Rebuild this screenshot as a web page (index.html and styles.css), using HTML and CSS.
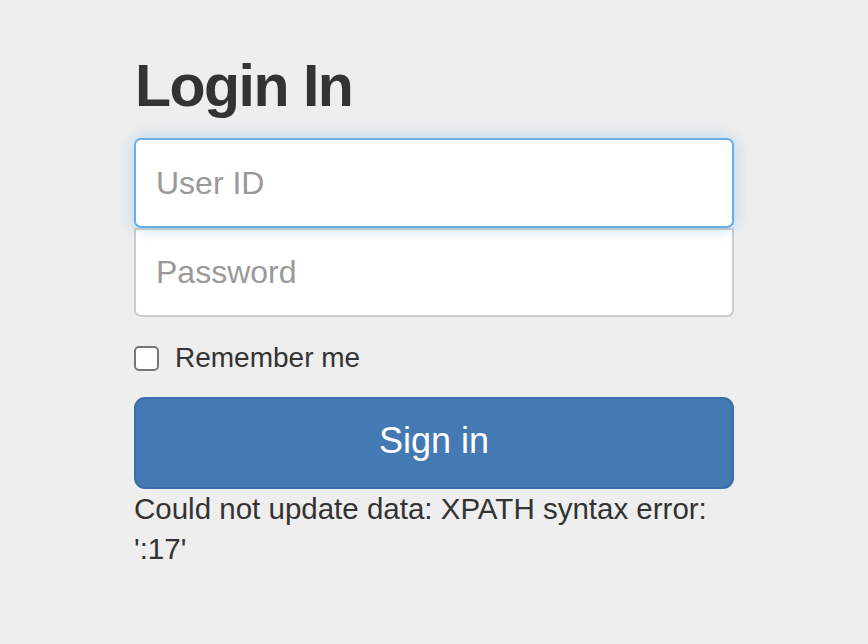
FILE: index.html
```html
<!DOCTYPE html>
<html>
<head>
<meta charset="utf-8">
<link rel="stylesheet" href="styles.css">
</head>
<body>
<div class="container">
  <form class="form-signin">
    <h2 class="heading">Login In</h2>
    <input class="field field-focus" type="text" placeholder="User ID">
    <input class="field field-pass" type="password" placeholder="Password">
    <label class="remember"><span class="check"></span>Remember me</label>
    <button class="btn" type="button">Sign in</button>
    <p class="error">Could not update data: XPATH syntax error: ':17'</p>
  </form>
</div>
</body>
</html>
```

FILE: styles.css
```css
html, body {
  margin: 0;
  padding: 0;
  background: #eeeeee;
  font-family: "Liberation Sans", Arial, Helvetica, sans-serif;
  color: #333333;
}
.container {
  display: flex;
  justify-content: center;
  padding-top: 53px;
}
.form-signin {
  width: 600px;
  display: flex;
  flex-direction: column;
}
.heading {
  margin: 0 0 19px 1px;
  font-size: 59px;
  line-height: 66px;
  font-weight: 700;
  letter-spacing: -1.5px;
  color: #333333;
}
.field {
  box-sizing: border-box;
  width: 600px;
  height: 90px;
  margin: 0;
  padding: 0 20px;
  font-family: "Liberation Sans", Arial, Helvetica, sans-serif;
  font-size: 32px;
  color: #555555;
  background: #ffffff;
  border: 2px solid #cccccc;
  border-radius: 7px;
  outline: none;
}
.field::placeholder {
  color: #999999;
}
.field-focus {
  position: relative;
  z-index: 1;
  border-color: #66afe9;
  box-shadow: 0 0 16px rgba(102, 175, 233, 0.45);
}
.field-pass {
  margin-top: 0;
  height: 89px;
  border-top-left-radius: 0;
  border-top-right-radius: 0;
}
.remember {
  display: flex;
  align-items: center;
  margin-top: 21px;
  font-size: 28px;
  line-height: 40px;
  color: #333333;
}
.check {
  box-sizing: border-box;
  width: 25px;
  height: 25px;
  margin-right: 16px;
  background: #ffffff;
  border: 2px solid #767676;
  border-radius: 5px;
}
.btn {
  box-sizing: border-box;
  width: 600px;
  height: 92px;
  margin-top: 19px;
  padding: 0 0 4px 0;
  font-family: "Liberation Sans", Arial, Helvetica, sans-serif;
  font-size: 36px;
  color: #ffffff;
  background: #4479b3;
  border: 2px solid #3b6ea6;
  border-radius: 11px;
}
.error {
  margin: 0;
  font-size: 29.5px;
  line-height: 40px;
  color: #333333;
  width: 600px;
}
```
